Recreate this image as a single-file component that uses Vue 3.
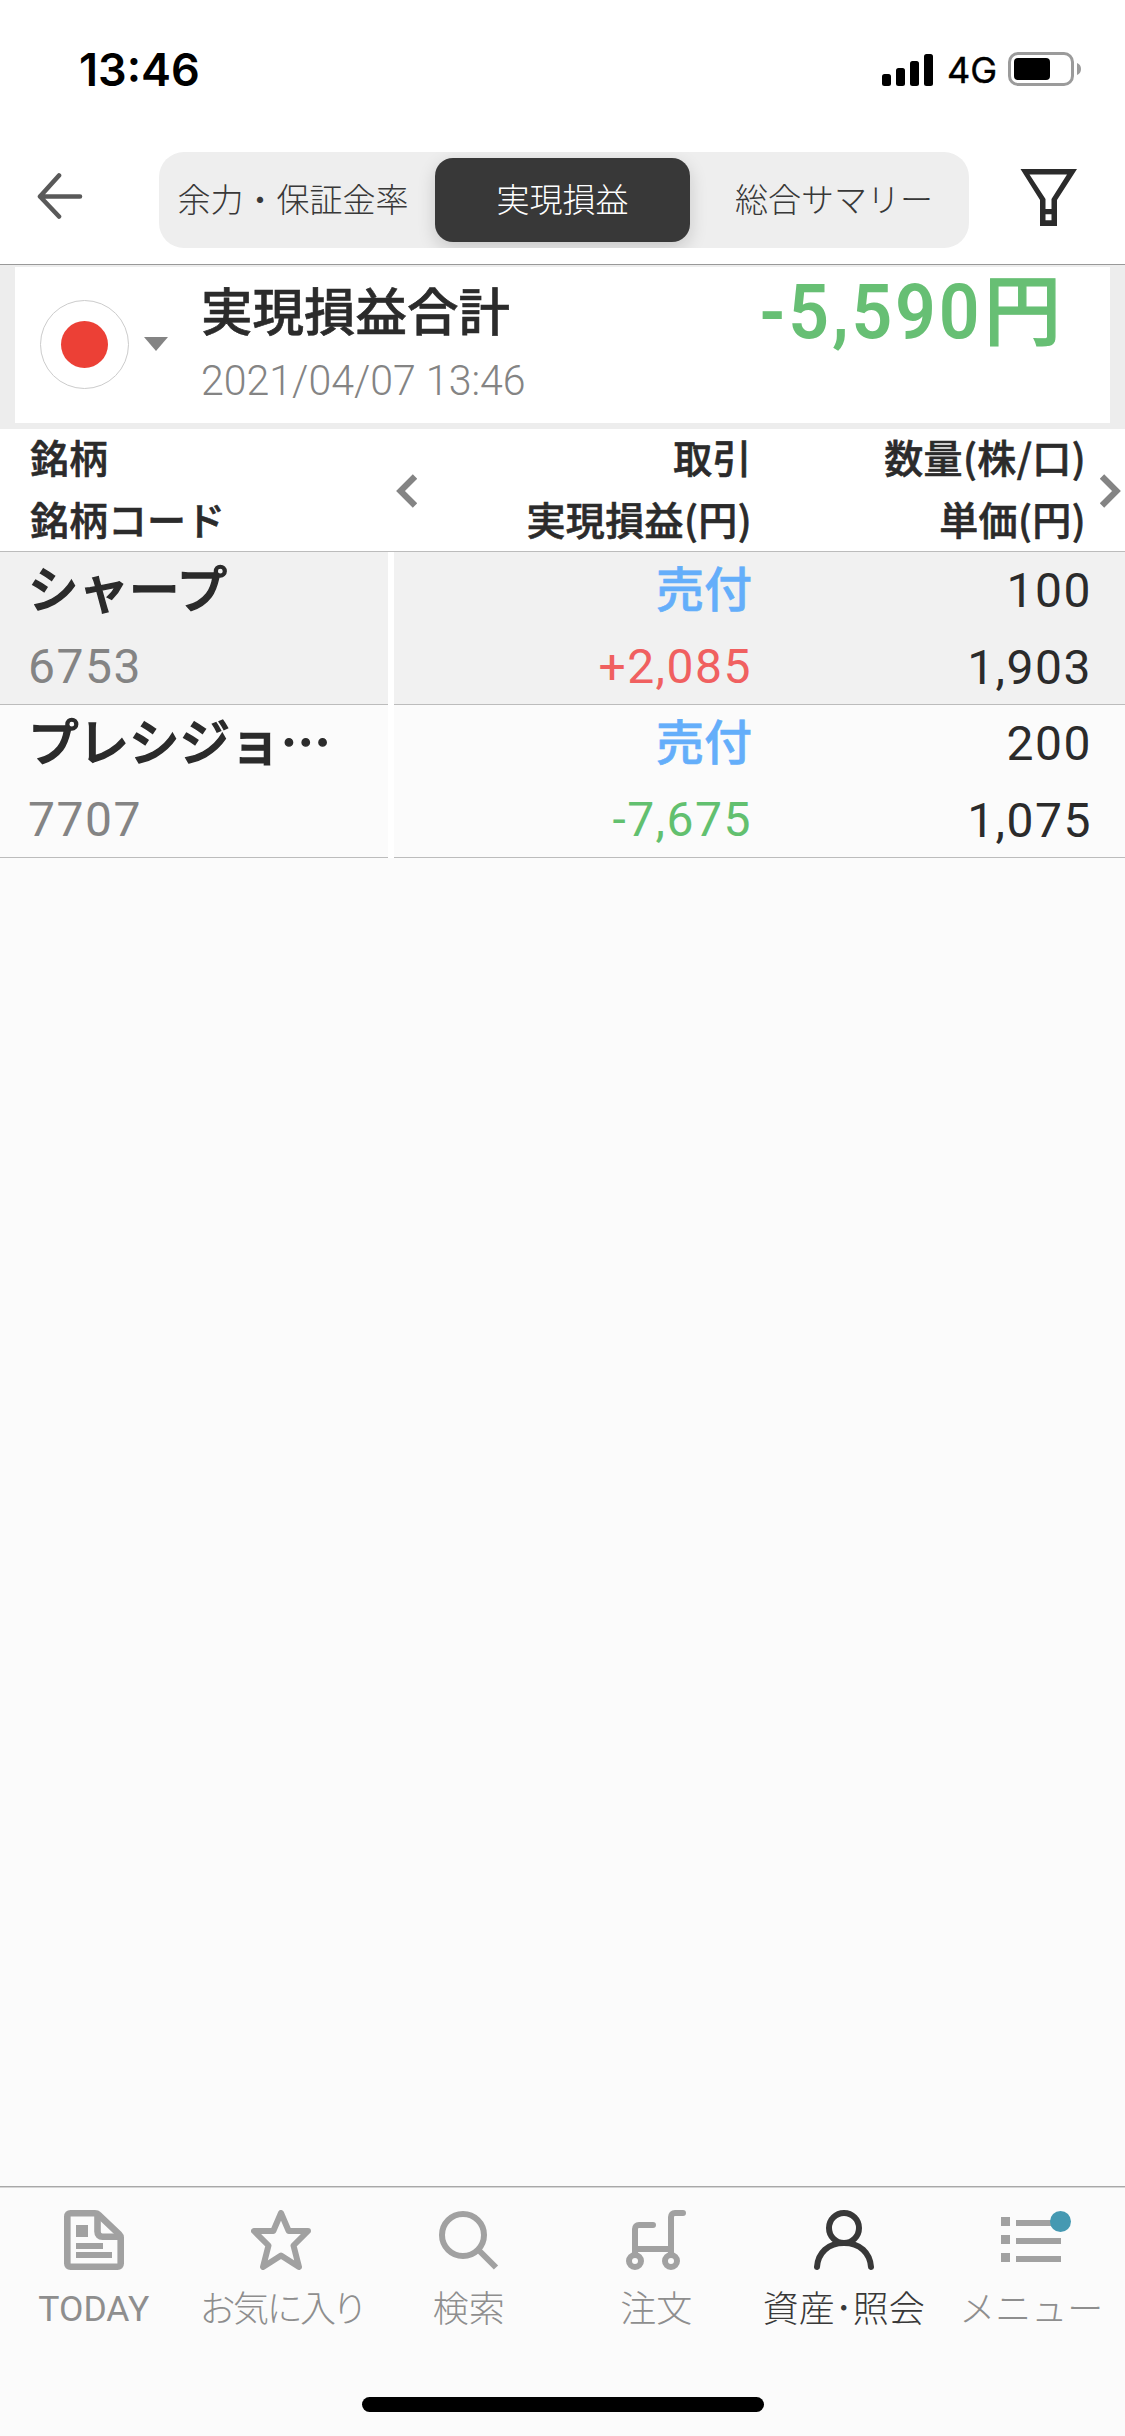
<script setup>
const tabs = ['余力・保証金率', '実現損益', '総合サマリー']
const activeTab = 1

const rows = [
  { name: 'シャープ', code: '6753', side: '売付', pl: '+2,085', tone: 'gain', qty: '100', price: '1,903' },
  { name: 'プレシジョ…', code: '7707', side: '売付', pl: '-7,675', tone: 'loss', qty: '200', price: '1,075' },
]

const nav = [
  { id: 'today', label: 'TODAY' },
  { id: 'fav', label: 'お気に入り' },
  { id: 'search', label: '検索' },
  { id: 'order', label: '注文' },
  { id: 'assets', label: '資産･照会' },
  { id: 'menu', label: 'メニュー' },
]
</script>

<template>
  <div class="screen">
    <div class="status">
      <span class="clock">13:46</span>
      <svg class="signal" width="51" height="33" viewBox="0 0 51 33">
        <rect x="0" y="21" width="9" height="12" rx="2.5" />
        <rect x="14" y="15" width="9" height="18" rx="2.5" />
        <rect x="28" y="8" width="9" height="25" rx="2.5" />
        <rect x="42" y="1" width="9" height="32" rx="2.5" />
      </svg>
      <span class="network">4G</span>
      <svg class="battery" width="74" height="34" viewBox="0 0 74 34">
        <rect x="1.5" y="1.5" width="63" height="31" rx="8.5" fill="none" stroke="#9b9b9b" stroke-width="3" />
        <rect x="6" y="6" width="36" height="22" rx="4" fill="#000" />
        <path d="M69 11c2.7 1 4 3.300 4 6s-1.300 5-4 6z" fill="#9b9b9b" />
      </svg>
    </div>

    <header class="header">
      <svg class="back" width="46" height="47" viewBox="0 0 46 47" fill="none" stroke="#595959" stroke-width="4.600" stroke-linecap="round" stroke-linejoin="round">
        <path d="M22 2.500L3 23.500 22 43.500M3 23.500h40" />
      </svg>
      <div class="segments">
        <div v-for="(tab, i) in tabs" :key="tab" class="segment" :class="{ active: i === activeTab }">
          <span>{{ tab }}</span>
        </div>
      </div>
      <svg class="filter" width="58" height="58" viewBox="0 0 58 58">
        <path fill="#2b2b2b" fill-rule="evenodd" d="M.5 0h56.500L37 31v26H20V31zM9.500 5.500L25.500 30v10h6V30l15.500-24.500zM25.500 45.300v6h6v-6z" />
      </svg>
    </header>

    <section class="summary">
      <div class="card">
        <div class="flag"><i></i></div>
        <svg class="caret" width="24" height="14" viewBox="0 0 24 14"><path d="M0 0h24L12 14z" fill="#848484" /></svg>
        <div class="title">
          <div class="heading strong">実現損益合計</div>
          <div class="date">2021/04/07 13:46</div>
        </div>
        <div class="amount"><span class="figure">-5,590</span><span class="yen">円</span></div>
      </div>
    </section>

    <div class="thead strong">
      <div class="pin"><div>銘柄</div><div>銘柄コード</div></div>
      <svg class="chev" width="21" height="34" viewBox="0 0 21 34" fill="none" stroke="#848484" stroke-width="6.200"><path d="M19 2.500L4.500 17 19 31.500" /></svg>
      <div class="c2"><div>取引</div><div>実現損益(円)</div></div>
      <div class="c3"><div>数量(株/口)</div><div>単価(円)</div></div>
      <svg class="chev next" width="21" height="34" viewBox="0 0 21 34" fill="none" stroke="#848484" stroke-width="6.200"><path d="M2 2.500L16.500 17 2 31.500" /></svg>
    </div>

    <div v-for="(row, i) in rows" :key="row.code" class="row" :class="{ striped: i % 2 === 0 }">
      <div class="name-cell">
        <div class="name strong">{{ row.name }}</div>
        <div class="code num">{{ row.code }}</div>
      </div>
      <div class="data-cell">
        <div class="d2">
          <div class="side strong">{{ row.side }}</div>
          <div class="num" :class="row.tone">{{ row.pl }}</div>
        </div>
        <div class="d3">
          <div class="num">{{ row.qty }}</div>
          <div class="num">{{ row.price }}</div>
        </div>
      </div>
    </div>

    <div class="empty"></div>

    <nav class="nav">
      <div v-for="item in nav" :key="item.id" class="nav-item" :class="[item.id, { current: item.id === 'assets' }]">
        <svg class="icon" width="60" height="60" viewBox="0 0 60 60" fill="none" stroke="currentColor" stroke-width="6">
          <g v-if="item.id === 'today'">
            <path d="M6.500 3.300H31c1.500 0 2.500.4 3.500 1.400L55 24c1 1 1.700 2 1.700 3.500v26c0 2-1.200 3.200-3.200 3.200h-47c-2 0-3.200-1.200-3.200-3.200v-47c0-2 1.200-3.200 3.200-3.200z" stroke-width="6.600" />
            <path d="M33.500 5v16.500c0 3.500 2 5.200 5 5.200H56" stroke-width="6.600" />
            <path d="M12 15h12v12H12zM12 33h27v6H12zM12 42h36v6H12z" fill="currentColor" stroke="none" />
          </g>
          <path v-else-if="item.id === 'fav'" stroke-linejoin="round" d="M30 3l7.700 18H57L42.500 35.500 48 57 30 45.500 12 57l5.500-21.500L3 21h19.300z" />
          <g v-else-if="item.id === 'search'">
            <circle cx="24" cy="25" r="21" />
            <path d="M38.500 39L57 57.500" />
          </g>
          <g v-else-if="item.id === 'order'" stroke-linecap="round">
            <circle cx="9" cy="51" r="6" />
            <circle cx="45" cy="51" r="6" />
            <path d="M9 44V19c0-2.500 1.500-4 4-4h14M9 39h36M45 44V7c0-2.500 1.500-4 4-4h8" />
          </g>
          <g v-else-if="item.id === 'assets'" stroke-linecap="round">
            <circle cx="30" cy="18" r="15" />
            <path d="M3 57C4 43 14 33 30 33s26 10 27 24" />
          </g>
          <path v-else fill="currentColor" stroke="none" d="M0 7h9v9H0zM0 25h9v9H0zM0 43h9v9H0zM15 10h45v6H15zM15 28h45v6H15zM15 46h45v6H15z" />
        </svg>
        <i v-if="item.id === 'menu'" class="badge"></i>
        <span class="label">{{ item.label }}</span>
      </div>
    </nav>
    <div class="home"><i></i></div>
  </div>
</template>

<style>
body { margin: 0; background: #fbfbfb; }
</style>

<style scoped>
.screen {
  width: 1125px;
  height: 2436px;
  display: flex;
  flex-direction: column;
  overflow: hidden;
  background: #fbfbfb;
  color: #2b2b2b;
  font-family: "Noto Sans CJK JP", sans-serif;
  white-space: nowrap;
}
.screen * { box-sizing: border-box; }
svg { display: block; flex: none; }
.strong { font-weight: 500; -webkit-text-stroke: .6px currentColor; }

.status {
  height: 138px;
  flex: none;
  display: flex;
  align-items: center;
  padding: 0 43px 0 79px;
  background: #fff;
  color: #000;
  font-family: Inter, sans-serif;
}
.clock { width: 803px; font-size: 45px; font-weight: 600; }
.network { width: 61px; margin-left: 14px; font-size: 36px; font-weight: 400; line-height: 42px; padding-top: 2px; -webkit-text-stroke: .4px #000; }

.header {
  height: 127px;
  flex: none;
  display: flex;
  align-items: flex-start;
  padding-top: 14px;
  background: #fff;
  border-bottom: 1px solid #999;
}
.back { margin: 21px 76px 0 37px; }
.segments {
  display: flex;
  width: 810px;
  height: 96px;
  border-radius: 25px;
  background: #eee;
  overflow: hidden;
}
.segment {
  width: 270px;
  display: flex;
  align-items: center;
  justify-content: center;
  font-size: 33px;
  font-weight: 300;
  line-height: 48px;
  padding-bottom: 4px;
  color: #383838;
}
.segment:first-child { width: 268px; }
.segment.active {
  flex: none;
  width: 255px;
  height: 84px;
  margin: 6px 9px 0 8px;
  border-radius: 18px;
  background: #383838;
  color: #fff;
  box-shadow: 0 6px 18px rgba(0, 0, 0, .16);
}
.filter { margin: 17px 0 0 51px; }

.summary { height: 164px; flex: none; padding: 2px 15px 6px; background: #ededed; }
.card { height: 156px; display: flex; align-items: flex-start; background: #fff; }
.flag {
  width: 89px;
  height: 89px;
  margin: 33px 15px 0 25px;
  display: flex;
  align-items: center;
  justify-content: center;
  border: 1px solid #ccc;
  border-radius: 50%;
}
.flag i { width: 47px; height: 47px; border-radius: 50%; background: #ec4036; }
.caret { margin: 70px 33px 0 0; }
.title { width: 500px; }
.heading { font-size: 51.500px; line-height: 60px; margin-top: 12px; }
.date {
  font-family: Roboto, sans-serif;
  font-size: 43px;
  font-weight: 300;
  line-height: 50px;
  margin-top: 16px;
  color: #848484;
  transform: scaleX(.955);
  transform-origin: left;
}
.amount { flex: 1; display: flex; justify-content: flex-end; padding-right: 49px; color: #67bf74; }
.figure {
  margin-right: 2px;
  font-family: Roboto, sans-serif;
  font-size: 76px;
  font-weight: 600;
  line-height: 90px;
  letter-spacing: 3px;
  transform: scaleX(.94);
  transform-origin: right;
}
.yen { font-size: 77px; font-weight: 500; line-height: 78px; -webkit-text-stroke: 1.200px currentColor; }

.thead {
  height: 123px;
  flex: none;
  display: flex;
  background: #fff;
  border-bottom: 1px solid #bcbcbc;
  font-size: 39px;
  line-height: 62px;
}
.pin { width: 396px; padding-left: 30px; }
.pin, .c2, .c3 { margin-top: -4px; }
.chev { margin-top: 45px; }
.c2 { width: 335px; text-align: right; letter-spacing: .400px; }
.c3 { width: 334px; text-align: right; letter-spacing: .400px; }
.chev.next { margin-left: 14px; }

.row { height: 153px; flex: none; display: flex; gap: 6px; background: #fff; }
.name-cell, .data-cell { background: #fbfbfb; border-bottom: 1px solid #bcbcbc; }
.striped > * { background: #f1f1f1; }
.name-cell { width: 388px; padding-left: 28px; }
.data-cell { flex: 1; display: flex; }
.name { font-size: 50.500px; line-height: 69px; margin-bottom: 7px; -webkit-text-stroke-width: 1.500px; }
.side { font-size: 48px; line-height: 69px; margin-bottom: 7px; color: #64aefa; }
.d2 { width: 358px; text-align: right; }
.d3 { width: 340px; text-align: right; }
.num { font-family: Roboto, sans-serif; font-size: 48px; line-height: 77px; letter-spacing: 1.500px; }
.code { color: #848484; }
.gain { color: #f06060; }
.loss { color: #62c06f; }

.empty { flex: 1; }
.nav {
  height: 175px;
  flex: none;
  display: flex;
  border-top: 1px solid #a8a8a8;
  box-shadow: inset 0 1px #d6d6d6;
}
.nav-item {
  position: relative;
  width: 187.500px;
  display: flex;
  flex-direction: column;
  align-items: center;
  padding-top: 23px;
  color: #a1a1a1;
}
.label { margin-top: 10px; font-size: 36px; font-weight: 300; line-height: 52px; color: #8e8e8e; }
.today .label { margin-top: 13px; font-family: Roboto, sans-serif; font-weight: 400; font-size: 35.500px; }
.fav .label { font-feature-settings: "palt"; letter-spacing: -1.800px; }
.current, .current .label { color: #383838; }
.badge {
  position: absolute;
  left: 112px;
  top: 24px;
  width: 21px;
  height: 21px;
  border-radius: 50%;
  background: #4599b2;
}
.home { height: 75px; flex: none; display: flex; justify-content: center; padding-top: 36px; }
.home i { width: 402px; height: 15px; border-radius: 8px; background: #000; }
</style>
